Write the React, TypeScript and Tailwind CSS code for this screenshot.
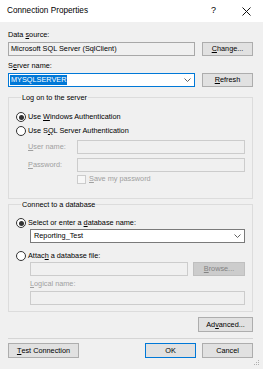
import type { ReactNode } from 'react';

const font = { fontFamily: '"Liberation Sans", Arial, sans-serif' };

function Key({ children }: { children: ReactNode }) {
  return <span className="underline underline-offset-[1px]">{children}</span>;
}

function Radio({ checked }: { checked?: boolean }) {
  return (
    <span className="w-[10px] h-[10px] rounded-full border border-[#333333] bg-white flex items-center justify-center shrink-0">
      {checked && <span className="w-[5px] h-[5px] rounded-full bg-[#333333]" />}
    </span>
  );
}

function Chevron() {
  return (
    <svg width="7" height="4" viewBox="0 0 7 4" className="shrink-0">
      <polyline points="0.5,0.5 3.5,3.5 6.5,0.5" fill="none" stroke="#606060" strokeWidth="1" />
    </svg>
  );
}

function Button({
  children,
  width,
  primary,
  disabled,
  height = 'h-[15px]',
}: {
  children: ReactNode;
  width: string;
  primary?: boolean;
  disabled?: boolean;
  height?: string;
}) {
  return (
    <div
      className={`${width} ${height} shrink-0 flex items-center justify-center border leading-none ${
        primary
          ? 'border-[#0078d7] bg-[#e1e1e1] text-black'
          : disabled
          ? 'border-[#bfbfbf] bg-[#cccccc] text-[#838383]'
          : 'border-[#adadad] bg-[#e1e1e1] text-black'
      }`}
    >
      {children}
    </div>
  );
}

/**
 * 接続プロパティ ダイアログ
 */
export default function App() {
  return (
    <div className="relative w-[263px] h-[369px] bg-[#f0f0f0] text-[7.3px] text-black overflow-hidden" style={font}>
      {/* タイトルバー */}
      <div className="h-[22px] bg-white flex items-center">
        <div className="pl-[7px] text-[8.2px] flex-1">Connection Properties</div>
        <div className="w-[33px] h-full flex items-center justify-center text-[9px]">?</div>
        <div className="w-[33px] h-full flex items-center justify-center">
          <svg width="9" height="9" viewBox="0 0 9 9">
            <line x1="0.5" y1="0.5" x2="8.5" y2="8.5" stroke="#111" strokeWidth="1" />
            <line x1="8.5" y1="0.5" x2="0.5" y2="8.5" stroke="#111" strokeWidth="1" />
          </svg>
        </div>
      </div>

      <div className="pl-[8px] pr-[10px] flex flex-col">
        <div className="mt-[8px] h-[9px] leading-[9px]">
          Data <Key>s</Key>ource:
        </div>
        <div className="mt-[3px] flex gap-[7px] h-[14px]">
          <div className="flex-1 border border-[#a8a8a8] bg-[#f0f0f0] pl-[2px] flex items-center">
            Microsoft SQL Server (SqlClient)
          </div>
          <Button width="w-[51px]" height="h-[14px]">
            <Key>C</Key>hange...
          </Button>
        </div>

        <div className="mt-[5px] h-[9px] leading-[9px]">
          S<Key>e</Key>rver name:
        </div>
        <div className="mt-[3px] flex gap-[7px] h-[14px]">
          <div className="flex-1 border border-[#0078d7] bg-white pl-[1px] pr-[3px] flex items-center">
            <span className="bg-[#0078d7] text-white leading-[10px] px-[1px]">MYSQLSERVER</span>
            <span className="flex-1" />
            <Chevron />
          </div>
          <Button width="w-[51px]" height="h-[14px]">
            <Key>R</Key>efresh
          </Button>
        </div>

        {/* サーバーへのログオン */}
        <fieldset className="mt-[6px] border border-[#dcdcdc] pl-[7px] pr-[7px] pb-[14px]">
          <legend className="ml-[5px] px-[1px] h-[9px] leading-[9px]">Log on to the server</legend>
          <div className="mt-[8px] h-[14px] flex items-center gap-[2px]">
            <Radio checked />
            <span>
              Use <Key>W</Key>indows Authentication
            </span>
          </div>
          <div className="h-[14px] flex items-center gap-[2px]">
            <Radio />
            <span>
              Use S<Key>Q</Key>L Server Authentication
            </span>
          </div>
          <div className="mt-[2px] h-[14px] flex items-center">
            <span className="w-[61px] pl-[12px] text-[#a0a0a0]">
              <Key>U</Key>ser name:
            </span>
            <div className="flex-1 h-full border border-[#cccccc] bg-[#f0f0f0]" />
          </div>
          <div className="mt-[4px] h-[14px] flex items-center">
            <span className="w-[61px] pl-[12px] text-[#a0a0a0]">
              <Key>P</Key>assword:
            </span>
            <div className="flex-1 h-full border border-[#cccccc] bg-[#f0f0f0]" />
          </div>
          <div className="mt-[3px] h-[9px] flex items-center gap-[3px] pl-[61px] text-[#a0a0a0]">
            <span className="w-[9px] h-[9px] border border-[#cccccc] bg-[#f7f7f7] shrink-0" />
            <span>
              <Key>S</Key>ave my password
            </span>
          </div>
        </fieldset>

        {/* データベースへの接続 */}
        <fieldset className="mt-[1px] border border-[#dcdcdc] pl-[7px] pr-[7px] pb-[6px]">
          <legend className="ml-[5px] px-[1px] h-[9px] leading-[9px]">Connect to a database</legend>
          <div className="mt-[8px] h-[12px] flex items-center gap-[2px]">
            <Radio checked />
            <span>
              Select or enter a <Key>d</Key>atabase name:
            </span>
          </div>
          <div className="ml-[14px] h-[14px] border border-[#7a7a7a] bg-white pl-[3px] pr-[3px] flex items-center">
            <span className="flex-1">Reporting_Test</span>
            <Chevron />
          </div>
          <div className="mt-[7px] h-[12px] flex items-center gap-[2px]">
            <Radio />
            <span>
              Attac<Key>h</Key> a database file:
            </span>
          </div>
          <div className="ml-[14px] h-[14px] flex gap-[5px]">
            <div className="flex-1 border border-[#cccccc] bg-[#f0f0f0]" />
            <Button width="w-[52px]" height="h-[14px]" disabled>
              <Key>B</Key>rowse...
            </Button>
          </div>
          <div className="ml-[14px] mt-[3px] h-[9px] leading-[9px] text-[#a0a0a0]">
            <Key>L</Key>ogical name:
          </div>
          <div className="ml-[14px] mt-[3px] h-[14px] border border-[#cccccc] bg-[#f0f0f0]" />
        </fieldset>

        <div className="mt-[5px] flex justify-end">
          <Button width="w-[55px]">
            Ad<Key>v</Key>anced...
          </Button>
        </div>

        <div className="mt-[6px] h-px bg-[#d5d5d5]" />

        <div className="mt-[4px] flex">
          <Button width="w-[71px]">
            <Key>T</Key>est Connection
          </Button>
          <span className="flex-1" />
          <Button width="w-[51px]" primary>
            OK
          </Button>
          <span className="w-[6px]" />
          <Button width="w-[51px]">Cancel</Button>
        </div>
      </div>

      {/* サイズ変更グリップ */}
      <svg width="6" height="6" viewBox="0 0 6 6" className="absolute right-[3px] bottom-[3px]">
        <rect x="4" y="0" width="1" height="1" fill="#b0b0b0" />
        <rect x="2" y="2" width="1" height="1" fill="#b0b0b0" />
        <rect x="4" y="2" width="1" height="1" fill="#b0b0b0" />
        <rect x="0" y="4" width="1" height="1" fill="#b0b0b0" />
        <rect x="2" y="4" width="1" height="1" fill="#b0b0b0" />
        <rect x="4" y="4" width="1" height="1" fill="#b0b0b0" />
      </svg>
    </div>
  );
}
